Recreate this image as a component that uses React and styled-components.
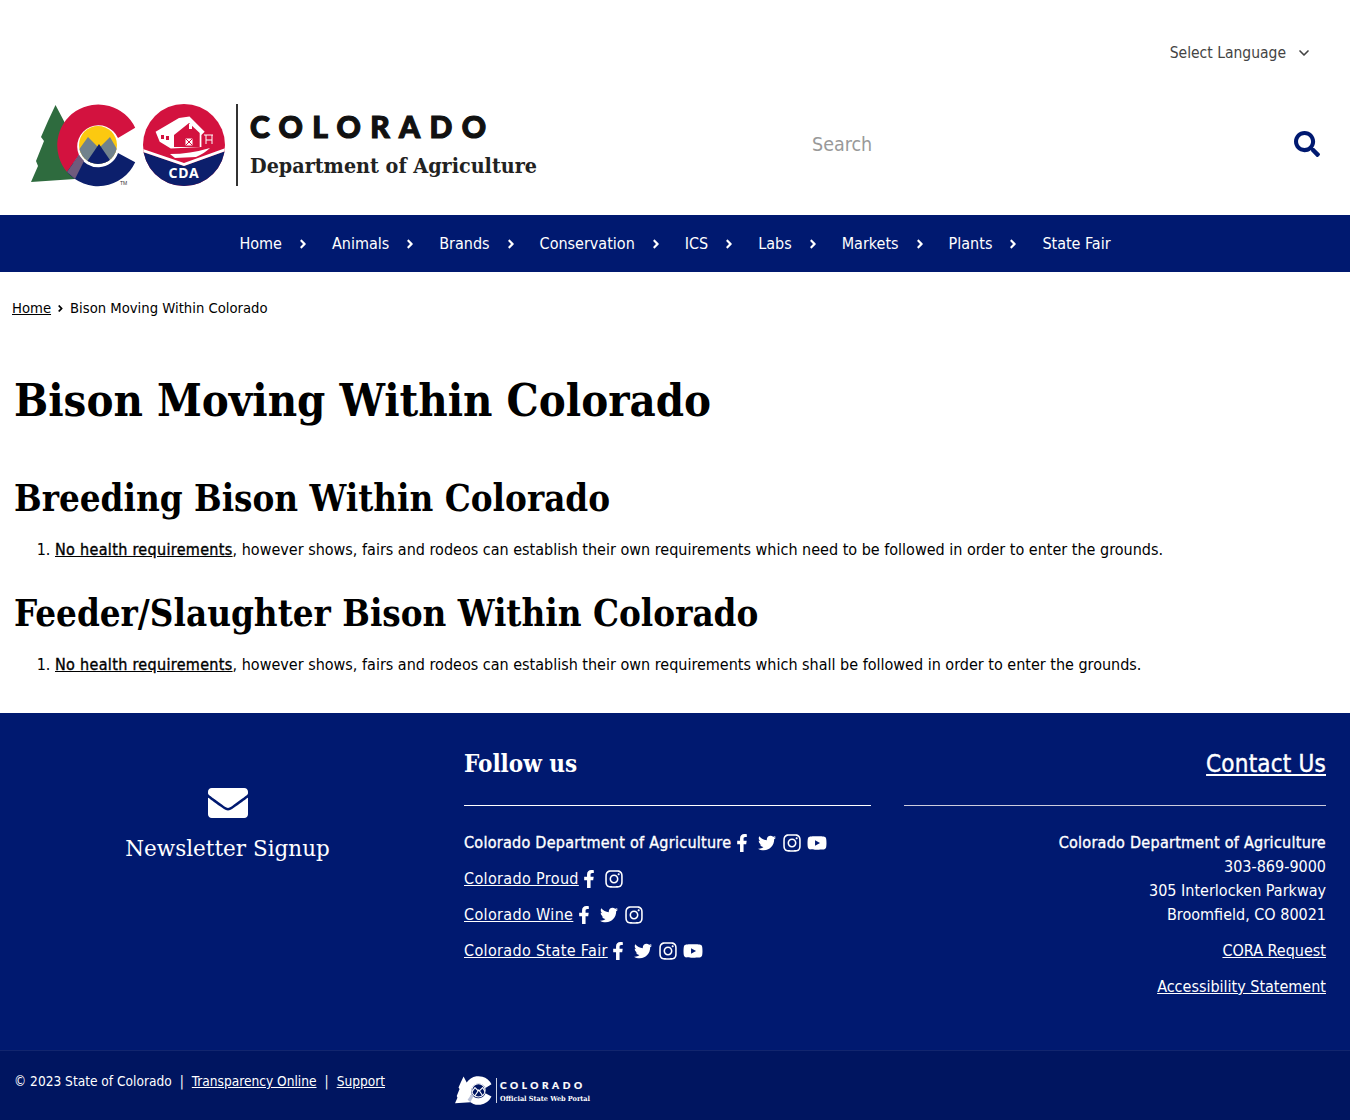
import React from "react";
import styled, { createGlobalStyle } from "styled-components";
import { FaSearch, FaEnvelope, FaFacebookF, FaTwitter, FaInstagram, FaYoutube, FaAngleRight } from "react-icons/fa";
import { FiChevronDown } from "react-icons/fi";

const BODY = `"DejaVu Sans Condensed", "DejaVu Sans", sans-serif`;
const SLAB = `"DejaVu Serif Condensed", "DejaVu Serif", serif`;
const NAVY = "#001970";

const Global = createGlobalStyle`
  html, body { margin: 0; padding: 0; background: #fff; }
  body { font-family: ${BODY}; font-stretch: condensed; font-size: 16px; color: #000; }
  a { color: inherit; }
`;

const TopBar = styled.div`
  height: 104px; display: flex; justify-content: flex-end; align-items: flex-start;
  padding: 42px 38px 0 0; box-sizing: border-box;
`;
const LanguagePicker = styled.div`
  display: flex; align-items: center; gap: 10px; color: #444; font-size: 15.500px; line-height: 22px;
  svg { font-size: 16px; stroke-width: 2.5; }
`;
const Header = styled.header`
  height: 111px; display: flex; align-items: flex-start; justify-content: space-between;
  padding: 0 30px; box-sizing: border-box;
`;
const SearchBox = styled.div`
  width: 508px; height: 80px; display: flex; align-items: center; justify-content: space-between;
  color: #999; font-size: 19.500px;
  svg { color: ${NAVY}; font-size: 26px; }
`;
const Nav = styled.nav`
  height: 57px; background: ${NAVY}; display: flex; justify-content: center; align-items: center;
  color: #fff; font-size: 16px;
`;
const NavItem = styled.div`
  display: flex; align-items: center; gap: 14px; margin-right: 22px;
  &:last-child { margin-right: 0; }
  svg { font-size: 14px; }
`;
const Crumbs = styled.div`
  padding: 25px 12px 0; font-size: 14.700px; line-height: 22px; display: flex; align-items: center; gap: 4px;
  svg { font-size: 11px; }
`;
const Main = styled.main`
  padding: 56px 15px 0; height: 394px; box-sizing: border-box;
`;
const H1 = styled.h1`
  font-family: ${SLAB}; font-stretch: condensed; font-weight: 700; font-size: 45px; line-height: 52px;
  margin: 0 0 0 -1px;
`;
const H2 = styled.h2`
  font-family: ${SLAB}; font-stretch: condensed; font-weight: 700; font-size: 36.400px; line-height: 44px;
  margin: 50px 0 0 -1px;
  & + ol { margin-top: 17px; }
  ol + & { margin-top: 30px; }
`;
const List = styled.ol`
  margin: 0; padding-left: 40px; line-height: 24px; font-size: 16px;
  a { -webkit-text-stroke: 0.35px currentColor; letter-spacing: 0.32px; }
`;
const Footer = styled.footer`
  background: ${NAVY}; color: #fff; height: 337px; display: grid;
  grid-template-columns: 464px 407px 1fr; box-sizing: border-box;
`;
const SignupCol = styled.div`
  width: 455px; display: flex; flex-direction: column; align-items: center; padding-top: 70px;
  font-family: "DejaVu Serif", serif; font-stretch: normal; font-size: 21.500px;
  svg { font-size: 40px; margin-bottom: 13px; }
`;
const FollowCol = styled.div`padding-top: 31px;`;
const FollowTitle = styled.div`
  font-family: ${SLAB}; font-stretch: condensed; font-weight: 700; font-size: 24px; line-height: 40px;
  border-bottom: 1px solid #fff; margin-bottom: 24px; height: 61px;
`;
const SocialRow = styled.div`
  display: flex; align-items: center; height: 24px; margin-bottom: 12px;
  -webkit-text-stroke: ${p => (p.$bold ? "0.35px currentColor" : "0")};
  letter-spacing: ${p => (p.$bold ? "0.27px" : "0")};
  a { letter-spacing: 0.35px; }
`;
const Icons = styled.span`
  display: inline-flex; align-items: center; margin-left: -2px; -webkit-text-stroke: 0;
`;
const IconSlot = styled.span`
  display: inline-flex; align-items: center; justify-content: center; width: 25px; height: 24px;
  padding-top: 2px; box-sizing: border-box; font-size: ${p => p.$size}px;
`;
const ContactCol = styled.div`
  margin-left: 33px; margin-right: 24px; padding-top: 31px; text-align: right; line-height: 24px;
`;
const ContactTitle = styled.div`
  font-size: 24px; line-height: 40px; height: 61px; border-bottom: 1px solid #ccd; margin-bottom: 25px;
  -webkit-text-stroke: 0.4px currentColor; letter-spacing: 0.2px;
`;
const Strong = styled.span`-webkit-text-stroke: 0.35px currentColor; letter-spacing: 0.27px;`;
const Para = styled.div`margin-bottom: 12px;`;
const Bottom = styled.div`
  height: 70px; background: #001560; border-top: 1px solid #12266e; box-sizing: border-box; color: #fff;
  display: grid; grid-template-columns: 440px 1fr; font-size: 13.600px; padding: 20px 0 0 14px;
  svg { margin: 5px 0 0 1px; }
`;
const Legal = styled.div`display: flex; gap: 8px; line-height: 20px;`;

const Mark = ({ fill, id }) => (
  <>
    <path d="M55.500 104 L66 124 L72 150 L75 178 L31 181 L38 165 L36 160 L44 140 L41 136 L48 120Z" fill={fill.tree} />
    <path d="M135.200 126.700 A41 41 0 1 0 67 171 L79 154 A21 21 0 1 1 118 137Z" fill={fill.red} />
    <path d="M67 171 A41 41 0 0 0 135.200 161.300 L118 152 A21 21 0 0 1 79 154Z" fill={fill.blue} />
    <path d="M67 171 L79 154 L84 160 L75 178Z" fill={fill.wedge} />
    <clipPath id={id}><circle cx="98" cy="144" r="19" /></clipPath>
    <g clipPath={`url(#${id})`}>
      <rect x="79" y="125" width="38" height="38" fill={fill.sun} />
      <path d="M78 150 L88 136 L99 147 L110 136 L118 150 L118 165 L78 165Z" fill={fill.ridge} stroke={fill.line} strokeWidth="3" />
      <path d="M84 165 L99 143 L114 165Z" fill={fill.peak} stroke={fill.line} strokeWidth="3" />
    </g>
    {fill.line && <circle cx="98" cy="144" r="19" fill="none" stroke={fill.line} strokeWidth="3" />}
  </>
);

const Logo = () => (
  <svg width="510" height="84" viewBox="0 0 510 84" aria-label="Colorado Department of Agriculture">
    <g transform="translate(-30 -103)">
      <Mark id="mk1" fill={{ tree: "#2e6b3e", red: "#d3123f", blue: "#0c1f6c", wedge: "#6f5b7d", sun: "#fcc910", ridge: "#71828c", peak: "#0c1f6c" }} />
      <text x="120" y="184" fontSize="5" fontFamily="Liberation Sans" fill="#333">TM</text>
      <clipPath id="badge"><circle cx="184" cy="144" r="41" /></clipPath>
      <g clipPath="url(#badge)">
        <rect x="143" y="103" width="82" height="82" fill="#d3123f" />
        <path d="M143 151 L184 165 L226 150 L226 186 L143 186Z" fill="#0c1f6c" />
        <path d="M143 148 L184 162 L226 147 L226 150 L184 165 L143 151Z" fill="#fff" />
      </g>
      <path d="M155.600 130.700 L179 117 L189.500 115.400 L204.700 130.700 L201.400 134 L201.400 146 L170.800 147.600 L159.700 140.800Z" fill="#fff" />
      <path d="M174 134 L189 122 L199.700 132 L199.700 146 L174 146Z" fill="#d3123f" />
      <rect x="189" y="123" width="3" height="5" fill="#fff" />
      <rect x="185.500" y="137.500" width="7" height="7" fill="#fff" />
      <path d="M185.500 137.500 L192.500 144.500 M192.500 137.500 L185.500 144.500" stroke="#d3123f" strokeWidth="1" />
      <rect x="161" y="134" width="3" height="4" fill="#d3123f" />
      <rect x="166" y="135" width="3" height="4" fill="#d3123f" />
      <path d="M204 134 L213 134 M206 134 L206 143 M212 134 L212 143 M206 139 L212 139" stroke="#fff" strokeWidth="1" fill="none" />
      <path d="M170 153 Q190 153 210 147 Q205 152 196 156 L175 157Z" fill="#fff" />
      <text x="184" y="177" textAnchor="middle" fontFamily="Noto Sans" fontWeight="700" fontSize="14" letterSpacing="0.8" fill="#fff">CDA</text>
      <rect x="236" y="103" width="2" height="82" fill="#333" />
      <text x="250" y="137" fontFamily="Lato" fontWeight="900" fontSize="30" fill="#111" stroke="#111" strokeWidth="1.200" textLength="236" lengthAdjust="spacing">COLORADO</text>
      <text x="250" y="172" fontFamily="DejaVu Serif" fontWeight="700" fontSize="21" fill="#222" textLength="287" lengthAdjust="spacingAndGlyphs">Department of Agriculture</text>
    </g>
  </svg>
);

const PortalLogo = () => (
  <svg width="136" height="30" viewBox="0 0 136 30" aria-label="Colorado Official State Web Portal">
    <g transform="translate(-10.850 -36) scale(0.35)">
      <Mark id="mk2" fill={{ tree: "#fff", red: "#fff", blue: "#fff", wedge: "#b9c0d8", sun: "#001560", ridge: "#001560", peak: "#001560", line: "#fff" }} />
    </g>
    <rect x="41" y="2" width="1" height="25" fill="#cfd4e6" />
    <text x="45" y="13" fontFamily="Lato" fontWeight="900" fontSize="10" fill="#fff" stroke="#fff" strokeWidth="0.200" textLength="82" lengthAdjust="spacing">COLORADO</text>
    <text x="45" y="25" fontFamily="DejaVu Serif" fontWeight="700" fontSize="7" fill="#fff" textLength="90" lengthAdjust="spacingAndGlyphs">Official State Web Portal</text>
  </svg>
);

const NAV = ["Home", "Animals", "Brands", "Conservation", "ICS", "Labs", "Markets", "Plants", "State Fair"];
const F = [FaFacebookF, 18], T = [FaTwitter, 18], I = [FaInstagram, 20], Y = [FaYoutube, 20];
const SOCIAL = [
  { name: "Colorado Department of Agriculture", bold: true, icons: [F, T, I, Y] },
  { name: "Colorado Proud", link: true, icons: [F, I] },
  { name: "Colorado Wine", link: true, icons: [F, T, I] },
  { name: "Colorado State Fair", link: true, icons: [F, T, I, Y] },
];

export default function App() {
  return (
    <>
      <Global />
      <TopBar><LanguagePicker>Select Language <FiChevronDown /></LanguagePicker></TopBar>
      <Header>
        <Logo />
        <SearchBox>Search <FaSearch /></SearchBox>
      </Header>
      <Nav>
        {NAV.map((n, i) => (
          <NavItem key={n}>{n}{i < NAV.length - 1 && <FaAngleRight />}</NavItem>
        ))}
      </Nav>
      <Crumbs><a href="#">Home</a><FaAngleRight /> Bison Moving Within Colorado</Crumbs>
      <Main>
        <H1>Bison Moving Within Colorado</H1>
        <H2>Breeding Bison Within Colorado</H2>
        <List><li><a href="#">No health requirements</a>, however shows, fairs and rodeos can establish their own requirements which need to be followed in order to enter the grounds.</li></List>
        <H2>Feeder/Slaughter Bison Within Colorado</H2>
        <List><li><a href="#">No health requirements</a>, however shows, fairs and rodeos can establish their own requirements which shall be followed in order to enter the grounds.</li></List>
      </Main>
      <Footer>
        <SignupCol><FaEnvelope />Newsletter Signup</SignupCol>
        <FollowCol>
          <FollowTitle>Follow us</FollowTitle>
          {SOCIAL.map(s => (
            <SocialRow key={s.name} $bold={s.bold}>
              {s.link ? <a href="#">{s.name}</a> : s.name}
              <Icons>{s.icons.map(([Icon, size], k) => <IconSlot key={k} $size={size}><Icon /></IconSlot>)}</Icons>
            </SocialRow>
          ))}
        </FollowCol>
        <ContactCol>
          <ContactTitle><a href="#">Contact Us</a></ContactTitle>
          <Para><Strong>Colorado Department of Agriculture</Strong><br />303-869-9000<br />305 Interlocken Parkway<br />Broomfield, CO 80021</Para>
          <Para><a href="#">CORA Request</a></Para>
          <Para><a href="#">Accessibility Statement</a></Para>
        </ContactCol>
      </Footer>
      <Bottom>
        <Legal>© 2023 State of Colorado <span>|</span> <a href="#">Transparency Online</a> <span>|</span> <a href="#">Support</a></Legal>
        <PortalLogo />
      </Bottom>
    </>
  );
}
